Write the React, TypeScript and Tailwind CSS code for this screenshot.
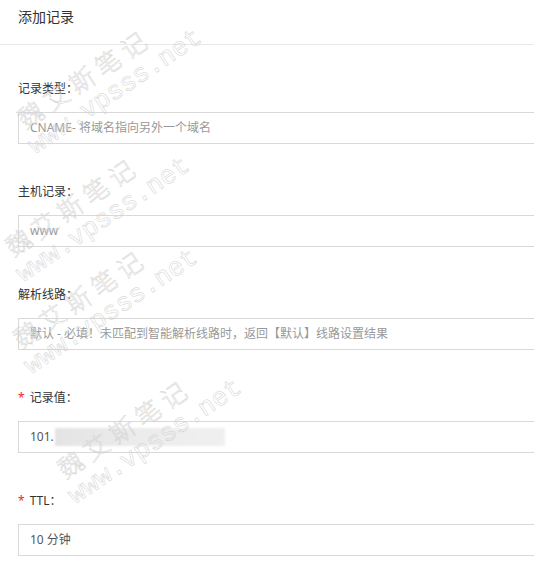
import React from "react";
import clsx from "clsx";

const fields = [
  { label: "记录类型", value: "CNAME- 将域名指向另外一个域名", muted: true },
  { label: "主机记录", value: "www", muted: true },
  { label: "解析线路", value: "默认 - 必填！未匹配到智能解析线路时，返回【默认】线路设置结果", muted: true },
  { label: "记录值", value: "101.", required: true, blurred: true },
  { label: "TTL", value: "10 分钟", required: true },
];

// faint diagonal watermark that sits over the form
function Watermark({ className }: { className: string }) {
  return (
    <div
      className={clsx(
        "pointer-events-none absolute z-10 origin-top-left -rotate-[34deg] select-none whitespace-nowrap text-transparent [-webkit-text-stroke:0.5px_#d2d2d2]",
        className
      )}
    >
      <div className="text-[25px] font-light leading-[30px] tracking-[6px] font-['Noto_Sans_CJK_SC',sans-serif]">魏艾斯笔记</div>
      <div className="-ml-[6px] text-[26px] leading-[30px] font-['Liberation_Mono',monospace]">www.vpsss.net</div>
    </div>
  );
}

export default function App() {
  return (
    <div className="relative h-[566px] w-full overflow-hidden bg-white text-[#333] font-['Noto_Sans','Noto_Sans_CJK_SC',sans-serif]">
      {/* header */}
      <div className="h-[45px] border-b border-[#e8e8e8] px-[18px] pt-[7px] text-[14px] leading-[20px]">添加记录</div>

      {/* form */}
      <div className="flex flex-col gap-[38px] pl-[18px] pt-[34px]">
        {fields.map((f) => (
          <div key={f.label} className="flex flex-col gap-[13px]">
            <div className="flex h-[20px] items-center text-[12px] leading-[20px]">
              {f.required && <span className="mr-[5px] text-[#f5222d]">*</span>}
              <span>{f.label}：</span>
            </div>
            <div
              className={clsx(
                "flex h-[32px] w-[560px] items-center border border-[#d9d9d9] bg-white pl-[11px] text-[12px]",
                f.muted ? "text-[#999]" : "text-[#555]"
              )}
            >
              <span>{f.value}</span>
              {f.blurred && (
                <span className="ml-[1px] inline-block h-[18px] w-[170px] bg-gradient-to-r from-[#e4e4e4] via-[#ececec] to-[#f0f0f0] blur-[1px]" />
              )}
            </div>
          </div>
        ))}
      </div>

      <Watermark className="left-[11px] top-[108px]" />
      <Watermark className="left-[-1px] top-[236px]" />
      <Watermark className="left-[7px] top-[328px]" />
      <Watermark className="left-[51px] top-[458px]" />
    </div>
  );
}
